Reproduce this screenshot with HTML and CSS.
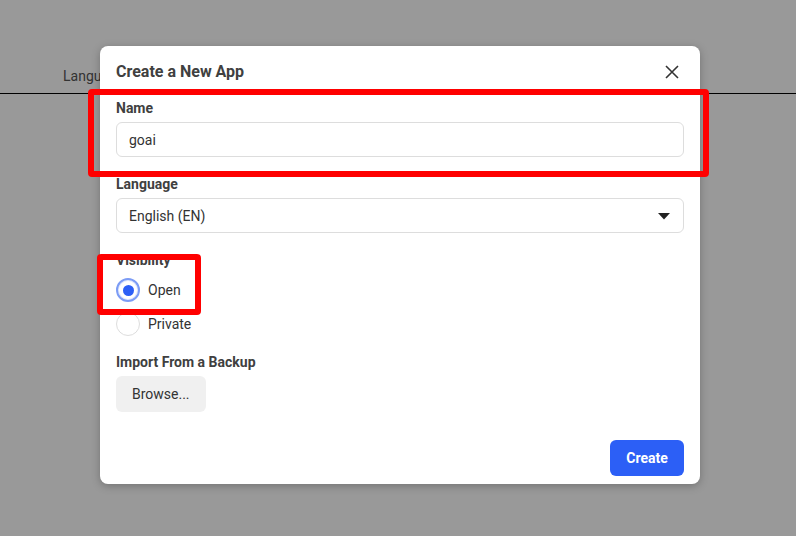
FILE: index.html
```html
<!DOCTYPE html>
<html lang="en">
<head>
<meta charset="utf-8">
<title>Create a New App</title>
<link rel="stylesheet" href="styles.css">
</head>
<body>
<div class="page">
  <div class="topbar">
    <span class="topbar-label">Language</span>
  </div>
</div>
<div class="overlay">
  <div class="modal">
    <div class="modal-header">
      <h2 class="modal-title">Create a New App</h2>
      <button class="close-btn" aria-label="Close">
        <svg width="14" height="14" viewBox="0 0 14 14"><path d="M1 1L13 13M13 1L1 13" stroke="#333" stroke-width="1.6" fill="none"/></svg>
      </button>
    </div>
    <div class="field">
      <div class="label">Name</div>
      <div class="input">goai</div>
    </div>
    <div class="field">
      <div class="label">Language</div>
      <div class="input select">
        <span>English (EN)</span>
        <svg class="caret" width="12" height="7" viewBox="0 0 12 7"><path d="M0 0H12L6 6.5Z" fill="#222"/></svg>
      </div>
    </div>
    <div class="field">
      <div class="label">Visibility</div>
      <div class="radios">
        <div class="radio-row"><span class="radio checked"></span><span>Open</span></div>
        <div class="radio-row"><span class="radio"></span><span>Private</span></div>
      </div>
    </div>
    <div class="field field-import">
      <div class="label">Import From a Backup</div>
      <button class="browse">Browse...</button>
    </div>
    <div class="modal-footer">
      <button class="create">Create</button>
    </div>
  </div>
</div>
<div class="annot annot-name"></div>
<div class="annot annot-open"></div>
</body>
</html>
```

FILE: styles.css
```css
* { box-sizing: border-box; }
html, body { margin: 0; padding: 0; }
body {
  width: 796px;
  height: 536px;
  background: #fff;
  font-family: Roboto, "Liberation Sans", sans-serif;
  font-size: 14px;
  color: #333;
  overflow: hidden;
  position: relative;
}
.page { height: 536px; }
.topbar {
  height: 94px;
  border-bottom: 1px solid #000;
  display: flex;
  align-items: flex-end;
  padding: 0 0 7px 63px;
}
.topbar-label { color: #555; font-size: 14px; line-height: 20px; }

.overlay {
  position: absolute;
  inset: 0;
  background: rgba(0, 0, 0, 0.4);
  padding: 46px 0 0 100px;
}
.modal {
  width: 600px;
  background: #fff;
  border-radius: 8px;
  padding: 0 16px 8px;
  box-shadow: 0 2px 8px rgba(0, 0, 0, 0.25);
}
.modal-header {
  height: 51px;
  display: flex;
  align-items: center;
  justify-content: space-between;
  padding-top: 1px;
}
.modal-title {
  margin: 0;
  font-size: 16px;
  font-weight: 700;
  color: #404040;
  line-height: 20px;
}
.close-btn {
  border: 0;
  background: none;
  padding: 0;
  width: 24px;
  height: 24px;
  display: flex;
  align-items: center;
  justify-content: center;
}
.field + .field { margin-top: 16px; }
.field.field-import { margin-top: 15px; }
.label {
  font-weight: 700;
  color: #404040;
  line-height: 20px;
  padding-top: 1px;
  margin-bottom: 4px;
}
.input {
  height: 35px;
  border: 1px solid #ddd;
  border-radius: 6px;
  padding: 0 12px;
  display: flex;
  align-items: center;
  color: #333;
}
.select { justify-content: space-between; padding-right: 13px; }
.caret { display: block; margin-top: 1px; }
.radios {
  display: flex;
  flex-direction: column;
  gap: 10px;
  padding-top: 4px;
}
.radio-row {
  display: flex;
  align-items: center;
  gap: 8px;
  height: 24px;
  color: #333;
}
.radio {
  width: 24px;
  height: 24px;
  border-radius: 50%;
  border: 1px solid #ddd;
  display: flex;
  align-items: center;
  justify-content: center;
}
.radio.checked {
  border: 2px solid #7c9cf5;
  box-shadow: inset 0 0 0 1px #dfe7fd;
}
.radio.checked::after {
  content: "";
  width: 11px;
  height: 11px;
  border-radius: 50%;
  background: #2c5ff6;
}
.browse {
  height: 36px;
  padding: 0 16px;
  border: 0;
  border-radius: 6px;
  background: #f0f0f0;
  font-family: inherit;
  font-size: 14px;
  color: #333;
}
.modal-footer {
  display: flex;
  justify-content: flex-end;
  margin-top: 28px;
}
.create {
  height: 36px;
  width: 74px;
  border: 0;
  border-radius: 6px;
  background: #2c5ff6;
  color: #fff;
  font-family: inherit;
  font-size: 14px;
  font-weight: 700;
}
.annot {
  position: absolute;
  border: 6px solid #ff0000;
  border-radius: 4px;
}
.annot-name { left: 88px; top: 89px; width: 621px; height: 88px; }
.annot-open { left: 97px; top: 254px; width: 104px; height: 61px; }
```
